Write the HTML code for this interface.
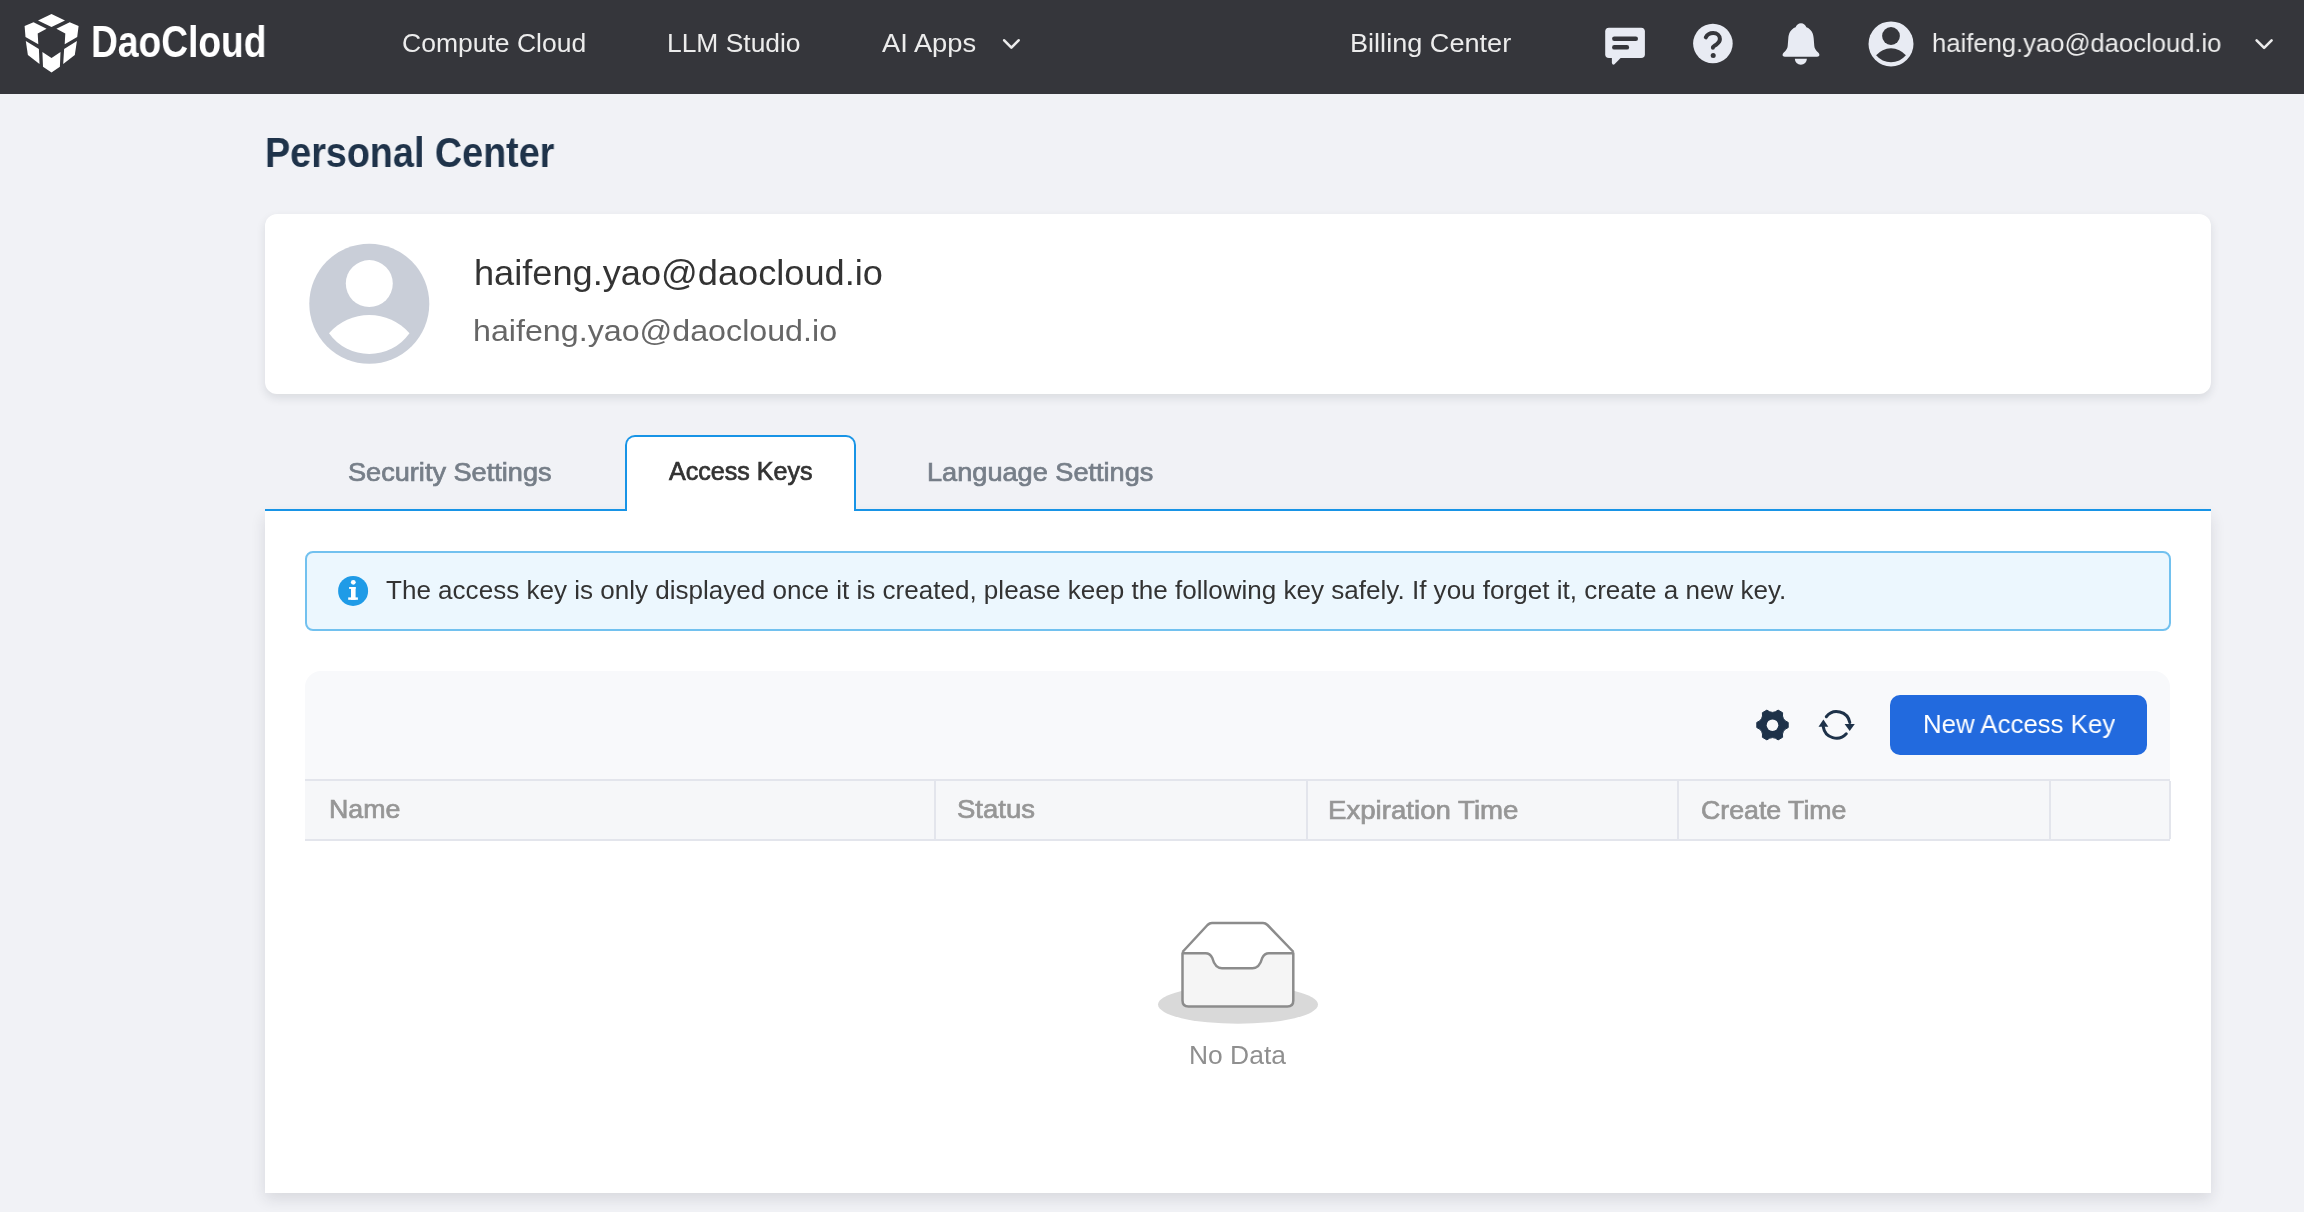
<!DOCTYPE html>
<html><head><meta charset="utf-8">
<style>
html,body{margin:0;padding:0;}
body{width:2304px;height:1212px;overflow:hidden;background:#f1f2f6;position:relative;font-family:"Liberation Sans",sans-serif;}
.t{position:absolute;white-space:nowrap;line-height:1;transform-origin:0 0;will-change:transform;}
#hdr{position:absolute;left:0;top:0;width:2304px;height:94px;background:#35363b;}
.nav{color:#ececec;font-size:26px;}
#card{position:absolute;left:265px;top:214px;width:1946px;height:180px;background:#fff;border-radius:12px;box-shadow:0 4px 10px rgba(30,35,50,0.11);}
#panel{position:absolute;left:265px;top:511px;width:1946px;height:682px;background:#fff;box-shadow:0 6px 14px rgba(30,35,50,0.12);}
#tabline{position:absolute;left:265px;top:509px;width:1946px;height:2px;background:#1894e6;}
#acttab{position:absolute;left:625px;top:435px;width:227px;height:74px;background:#fff;border:2px solid #1894e6;border-bottom:none;border-radius:10px 10px 0 0;}
#alert{position:absolute;left:305px;top:551px;width:1862px;height:76px;background:#ecf7fe;border:2px solid #72c1ef;border-radius:8px;}
#tool{position:absolute;left:305px;top:671px;width:1865px;height:108px;background:#f8f9fb;border-radius:16px 16px 0 0;}
#thead{position:absolute;left:305px;top:779px;width:1865px;height:61px;background:#f6f7f9;}
.hl{position:absolute;background:#e3e5ec;}
#btn{position:absolute;left:1890px;top:695px;width:257px;height:60px;background:#226ade;border-radius:10px;}
</style></head>
<body>
<div id="hdr"></div>
<svg style="position:absolute;left:0;top:0" width="2304" height="94">
  <g fill="#ffffff">
    <polygon points="51.5,13.9 65,20.6 51.5,27.1 38,20.6"/>
    <polygon points="24.6,26.1 33.5,22.3 46.6,28.8 37.7,33.5 38.3,44.2 25.5,37.1"/>
    <polygon points="78.6,26.1 69.7,22.3 56.4,28.8 65.3,33.5 64.7,44.2 77.2,37.1"/>
    <polygon points="25.8,41 38.9,49 39.5,63.9 27.9,54.9"/>
    <polygon points="76.9,41 64.1,49 63.2,63.9 74.8,54.9"/>
    <polygon points="42.4,52 51.5,57.9 60.5,52 59.9,66.8 51.5,72.4 43,66.8"/>
  </g>
  <g fill="#e8ebf3">
    <!-- chat -->
    <rect x="1605.2" y="27.8" width="39.7" height="30.3" rx="3.8"/>
    <path d="M1611.9 56 L1611.9 62.6 Q1612 65.6 1614.5 64.3 L1622.6 56 Z"/>
    <!-- question -->
    <circle cx="1712.9" cy="43.5" r="19.8"/>
    <!-- bell -->
    <path d="M1801 23.2 C1803.6 23.2 1805.6 24.9 1806.4 27.2 C1811.6 29.2 1813.4 33.6 1813.7 38.6 L1814.3 46 C1814.5 48.5 1815.8 50.2 1818.2 52.6 C1820.2 54.6 1819.6 56.8 1817.2 56.8 L1784.8 56.8 C1782.4 56.8 1781.8 54.6 1783.8 52.6 C1786.2 50.2 1787.5 48.5 1787.7 46 L1788.3 38.6 C1788.6 33.6 1790.4 29.2 1795.6 27.2 C1796.4 24.9 1798.4 23.2 1801 23.2 Z"/>
    <path d="M1794.8 58.8 L1806.9 58.8 A6.05 6 0 0 1 1794.8 58.8 Z"/>
    <!-- user -->
    <circle cx="1891" cy="43.9" r="22.5"/>
  </g>
  <g fill="#35363b">
    <rect x="1612.1" y="36.6" width="25.9" height="4.4" rx="2.2"/>
    <rect x="1612.1" y="45.1" width="17" height="4.5" rx="2.2"/>
    <circle cx="1713.2" cy="55.5" r="2.5"/>
    <circle cx="1891" cy="36" r="8.9"/>
    <path d="M1876.1 55.3 A19.4 19.4 0 0 1 1905.9 55.3 A19.5 19.5 0 0 1 1876.1 55.3 Z"/>
  </g>
  <path d="M1705.8 37.3 C1707.3 34.3 1710 32.9 1713.2 32.9 C1717 32.9 1719.9 35.6 1719.9 39.1 C1719.9 41.6 1718.6 42.9 1716.6 44.3 C1714.3 45.9 1712.9 46.4 1712.9 47.8" fill="none" stroke="#35363b" stroke-width="4" stroke-linecap="round"/>
  <g fill="none" stroke="#ececec" stroke-width="2.6" stroke-linecap="round" stroke-linejoin="round">
    <path d="M1004.2 40.3 L1011.4 47.6 L1018.6 40.3"/>
    <path d="M2256.6 40.3 L2264.1 47.8 L2271.6 40.3"/>
  </g>
</svg>


<div id="card"></div>
<svg style="position:absolute;left:0;top:0" width="1000" height="400">
  <circle cx="369.3" cy="303.7" r="60" fill="#c9ced8"/>
  <circle cx="369.3" cy="283.6" r="23.5" fill="#fff"/>
  <path d="M329 333.3 A53.6 53.6 0 0 1 409.5 333.3 A49.5 49.5 0 0 1 329 333.3 Z" fill="#fff"/>
</svg>

<div id="panel"></div>
<div id="tabline"></div>
<div id="acttab"></div>

<div id="alert"></div>
<svg style="position:absolute;left:0;top:500px" width="400" height="150">
  <g transform="translate(0,-500)">
  <circle cx="353.1" cy="590.9" r="15" fill="#1f9be7"/>
  <g fill="#fff">
    <circle cx="353.3" cy="582.3" r="2.4"/>
    <rect x="351" y="587" width="4.6" height="12.8"/>
    <rect x="349.1" y="587" width="6.5" height="1.9"/>
    <rect x="348.2" y="597.4" width="9.7" height="2.4"/>
  </g>
  </g>
</svg>

<div id="tool"></div>
<div id="thead"></div>
<div class="hl" style="left:305px;top:779px;width:1865px;height:2px;"></div>
<div class="hl" style="left:305px;top:839px;width:1865px;height:2px;"></div>
<div class="hl" style="left:934px;top:781px;width:2px;height:58px;"></div>
<div class="hl" style="left:1306px;top:781px;width:2px;height:58px;"></div>
<div class="hl" style="left:1677px;top:781px;width:2px;height:58px;"></div>
<div class="hl" style="left:2049px;top:781px;width:2px;height:58px;"></div>
<div class="hl" style="left:2169px;top:781px;width:2px;height:58px;"></div>

<svg style="position:absolute;left:0;top:0" width="2304" height="1212">
  <path d="M1788.20 722.40 L1788.20 727.60 Q1781.42 730.15 1782.60 737.30 L1778.10 739.90 Q1772.50 735.30 1766.90 739.90 L1762.40 737.30 Q1763.58 730.15 1756.80 727.60 L1756.80 722.40 Q1763.58 719.85 1762.40 712.70 L1766.90 710.10 Q1772.50 714.70 1778.10 710.10 L1782.60 712.70 Q1781.42 719.85 1788.20 722.40 Z" fill="#1e3249" stroke="#1e3249" stroke-width="1" stroke-linejoin="round"/>
  <circle cx="1772.5" cy="725.2" r="5.8" fill="#f7f8fa"/>
  <g fill="none" stroke="#1e3249" stroke-width="3" stroke-linecap="round">
    <path d="M1826.3 716.7 A13.3 13.3 0 0 1 1849.8 722.5"/>
    <path d="M1823.3 727 A13.3 13.3 0 0 0 1846.3 733.8"/>
  </g>
  <g fill="#1e3249">
    <polygon points="1844.6,724 1854.8,724 1849.7,731"/>
    <polygon points="1818.5,726.8 1828.3,726.8 1823.4,719.6"/>
  </g>
  <!-- empty -->
  <ellipse cx="1238" cy="1004.6" rx="80" ry="19.2" fill="#d9d9d9"/>
  <path d="M1182.5 952 L1207.5 925 Q1209.5 923 1212 923 L1263 923 Q1265.5 923 1267.5 925 L1293.5 952" fill="#fff" stroke="#8c8c8c" stroke-width="2.5" stroke-linejoin="round"/>
  <path d="M1182.5 953.3 L1205.5 953.3 Q1210 953.3 1212.3 958 Q1215 968.2 1222 968.2 L1252.5 968.2 Q1259.5 968.2 1262.2 958 Q1264.5 953.3 1269 953.3 L1293.3 953.3 L1293.3 1000.6 Q1293.3 1006.6 1287.3 1006.6 L1188.5 1006.6 Q1182.5 1006.6 1182.5 1000.6 Z" fill="#f5f5f5" stroke="#8c8c8c" stroke-width="2.5" stroke-linejoin="round"/>
</svg>
<div id="btn"></div>
<div class="t" style="left:91.00px;top:18.60px;font-size:45px;color:#fff;font-weight:bold;transform:scaleX(0.8257);">DaoCloud</div>
<div class="t" style="left:402.00px;top:30.20px;font-size:26px;color:#ececec;transform:scaleX(1.0194);">Compute Cloud</div>
<div class="t" style="left:667.00px;top:30.20px;font-size:26px;color:#ececec;transform:scaleX(1.0154);">LLM Studio</div>
<div class="t" style="left:881.50px;top:30.20px;font-size:26px;color:#ececec;transform:scaleX(1.0507);">AI Apps</div>
<div class="t" style="left:1349.50px;top:30.20px;font-size:26px;color:#ececec;transform:scaleX(1.0424);">Billing Center</div>
<div class="t" style="left:1931.50px;top:30.20px;font-size:26px;color:#ececec;transform:scaleX(0.9852);">haifeng.yao@daocloud.io</div>
<div class="t" style="left:264.90px;top:132.00px;font-size:41.6px;color:#1f334a;font-weight:bold;transform:scaleX(0.9072);">Personal Center</div>
<div class="t" style="left:473.50px;top:255.60px;font-size:34.5px;color:#333;transform:scaleX(1.0487);">haifeng.yao@daocloud.io</div>
<div class="t" style="left:472.50px;top:316.20px;font-size:30px;color:#666;transform:scaleX(1.0738);">haifeng.yao@daocloud.io</div>
<div class="t" style="left:348.20px;top:460.48px;font-size:25px;color:#767e88;transform:scaleX(1.0851);-webkit-text-stroke:0.7px #767e88;">Security Settings</div>
<div class="t" style="left:668.80px;top:459.28px;font-size:25px;color:#333;transform:scaleX(1.0028);-webkit-text-stroke:0.7px #333;">Access Keys</div>
<div class="t" style="left:927.00px;top:460.48px;font-size:25px;color:#767e88;transform:scaleX(1.0856);-webkit-text-stroke:0.7px #767e88;">Language Settings</div>
<div class="t" style="left:386.00px;top:577.00px;font-size:26px;color:#333;transform:scaleX(1.0017);">The access key is only displayed once it is created, please keep the following key safely. If you forget it, create a new key.</div>
<div class="t" style="left:1922.60px;top:710.60px;font-size:26px;color:#fff;transform:scaleX(0.9921);">New Access Key</div>
<div class="t" style="left:328.60px;top:795.60px;font-size:26px;color:#969696;transform:scaleX(1.0294);-webkit-text-stroke:0.7px #969696;">Name</div>
<div class="t" style="left:957.00px;top:795.60px;font-size:26px;color:#969696;transform:scaleX(1.0568);-webkit-text-stroke:0.7px #969696;">Status</div>
<div class="t" style="left:1328.40px;top:796.56px;font-size:26px;color:#969696;transform:scaleX(1.0629);-webkit-text-stroke:0.7px #969696;">Expiration Time</div>
<div class="t" style="left:1700.80px;top:796.60px;font-size:26px;color:#969696;transform:scaleX(1.0270);-webkit-text-stroke:0.7px #969696;">Create Time</div>
<div class="t" style="left:1188.50px;top:1042.20px;font-size:26px;color:#8f8f8f;transform:scaleX(1.0160);">No Data</div>
</body></html>
